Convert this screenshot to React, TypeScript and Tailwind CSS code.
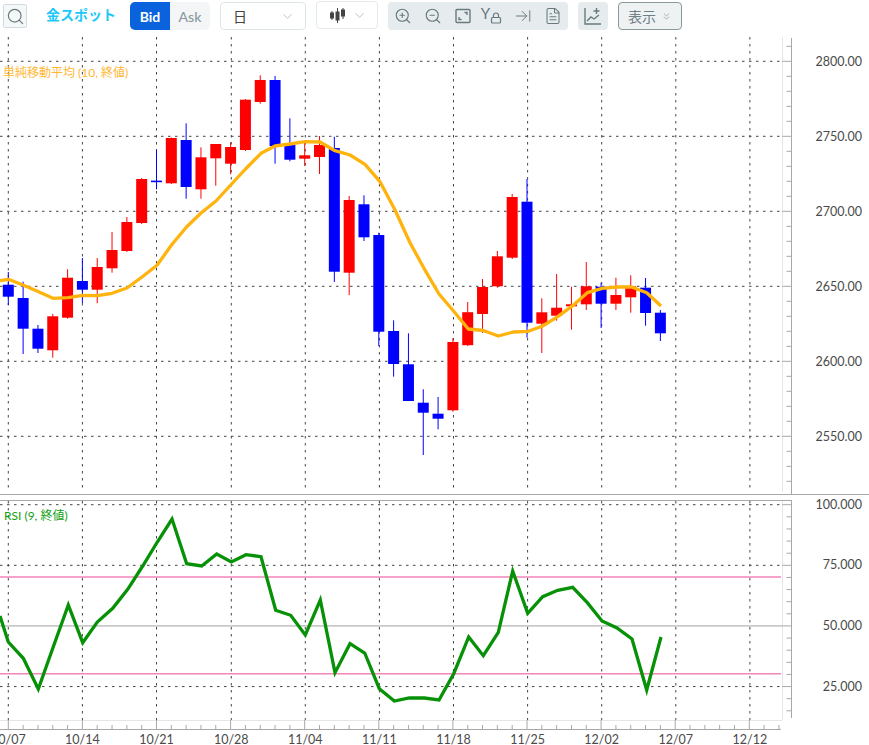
import { ChevronDown, ChevronsDown, Search, ZoomIn, ZoomOut, ArrowRightToLine, FileText, Lock } from 'lucide-react';

const FONT = "font-['Lato','Noto_Sans_CJK_JP',sans-serif]";

// x position of a candle on the page
const cx = (i: number) => 8.3 + 14.82 * i;

// wickTop, wickBottom, bodyTop, bodyBottom, up?
const CANDLES: [number, number, number, number, boolean][] = [
  [272, 305, 284.7, 296.7, false],
  [281.7, 354, 298, 328.7, false],
  [325, 353, 328.7, 348.7, false],
  [314, 357.7, 316.3, 350.3, true],
  [269.3, 318.7, 277.7, 317.7, true],
  [258, 303, 281, 289.7, false],
  [258, 303.3, 267, 289.7, true],
  [232, 272.7, 250, 268.3, true],
  [217, 252, 222, 251, true],
  [178, 224, 179, 223, true],
  [150, 189.3, 180.6, 182.2, false],
  [137.5, 184, 138, 183.3, true],
  [123.3, 198.7, 140, 187, false],
  [147.3, 198.7, 157.3, 189.3, true],
  [144, 185.7, 144, 158.3, true],
  [142.3, 174.3, 147, 163.7, true],
  [99, 151, 99.7, 150, true],
  [75.3, 103.7, 80, 102, true],
  [76, 163.7, 80, 146, false],
  [118.3, 161.3, 145, 159.7, false],
  [142, 166, 155.3, 158.7, true],
  [136, 174, 145, 157, true],
  [136.7, 282, 148, 271.7, false],
  [196, 295, 200, 272.7, true],
  [195.3, 241, 204.3, 237.3, false],
  [232.7, 346, 235, 331.7, false],
  [320.3, 376.7, 331, 364, false],
  [333.3, 401, 364.3, 401, false],
  [389.3, 455, 402.7, 412.7, false],
  [397, 429.3, 413.7, 418.7, false],
  [338.3, 411.7, 342, 410.3, true],
  [302, 346, 312.2, 345.2, true],
  [279, 333, 287, 314, true],
  [251, 287.7, 256.3, 286.3, true],
  [194, 259, 197, 257.7, true],
  [179, 337.7, 201.7, 322.7, false],
  [298.3, 353, 312.3, 323.7, true],
  [274, 320.7, 307.7, 315.7, true],
  [286.7, 329.7, 304.3, 306.3, true],
  [262, 310, 286.3, 304.3, true],
  [282.7, 328, 286.7, 303.7, false],
  [277.7, 310, 295, 303.7, true],
  [275.3, 312.7, 286.3, 297.3, true],
  [278, 325.7, 287.7, 313, false],
  [310, 341, 312.7, 333.3, false],
];

const MA_LINE =
  '0,280.7 8.3,279.3 23,285 38,291.5 53,298.3 68,297.7 82.7,295.3 97.5,295.7 112,293.3 127,288 142,277 157,265.3 171.5,245 186.5,227 201,213 216,201 230.7,185 245.5,169 261,153.3 275,146 290,144 305,141.7 320,142 335,150.7 350,155 365,164.3 380,181.7 395,210 410,242.7 424,268.3 439,294 453.5,311 468.3,329 483.3,330.5 498.3,336 513.3,332 528.3,331.3 542.7,326 557.7,316.7 572.7,305.7 587.3,292.7 602.3,288.3 616.7,287 631.7,287 646.7,292.7 661,306';

const RSI_LINE =
  '0,616 8.3,642 23.3,658.3 38.3,689 53.3,646.7 68.3,605 82.7,642.7 97.3,622 112.7,608.3 127.7,589.3 142.7,566 157.3,542 172,519 186.7,563.7 201.7,566 216.7,554 231.3,562 246,554.7 261,556.7 275.7,610.3 290.7,615.3 305.3,635 320.3,600 335,672.7 350,643.7 364.7,653 379.3,688.7 394.3,701 409.3,698 424.3,698 439,700 453.7,673.7 468.7,637 483.3,655.7 498.3,632.3 512.7,571 527.7,613.3 542.7,596.7 557.7,590.3 572.7,587.3 587.3,602.7 602,621 617,628 632,639 646.7,690 661,637';

const GRID_X = [8.3, 82.4, 156.5, 231.3, 305.3, 379.4, 453.5, 527.6, 601.7, 675.8, 749.9];
const DATES = ['10/07', '10/14', '10/21', '10/28', '11/04', '11/11', '11/18', '11/25', '12/02', '12/07', '12/12'];
const PRICES = [2800, 2750, 2700, 2650, 2600, 2550];
const priceY = (p: number) => 61.3 + (2800 - p) * 1.5;
const rsiY = (v: number) => 504.7 + (100 - v) * 2.425;

function DottedV({ top, bottom }: { top: number; bottom: number }) {
  return (
    <>
      {GRID_X.map((x) => (
        <line key={x} x1={x} x2={x} y1={top} y2={bottom} stroke="#444" strokeDasharray="2.5 4.5" />
      ))}
    </>
  );
}

function DottedH({ y }: { y: number }) {
  return <line x1={0} x2={782} y1={y} y2={y} stroke="#444" strokeDasharray="2.5 4.5" />;
}

function PricePane() {
  return (
    <svg width={869} height={457} viewBox="0 37 869 457" className="block shrink-0">
      <DottedV top={37} bottom={492} />
      {PRICES.map((p) => (
        <DottedH key={p} y={priceY(p)} />
      ))}

      {/* axis */}
      <line x1={782.5} x2={782.5} y1={37} y2={492} stroke="#e6e6e6" />
      <line x1={791.5} x2={791.5} y1={38} y2={494} stroke="#a8a8a8" />
      {Array.from({ length: 30 }, (_, k) => {
        const y = 46.3 + 15 * k;
        const major = (k - 1) % 5 === 0;
        return <line key={k} x1={major ? 782 : 786.5} x2={791} y1={y} y2={y} stroke="#a8a8a8" />;
      })}
      {PRICES.map((p) => (
        <text key={p} x={862} y={priceY(p) + 4.5} textAnchor="end" fontSize={12.5} fill="#4a4a4a">
          {p}.00
        </text>
      ))}

      {/* candles */}
      {CANDLES.map(([wt, wb, bt, bb, up], i) => {
        const x = cx(i);
        const color = up ? '#ff0000' : '#0000ff';
        return (
          <g key={i}>
            <line x1={x} x2={x} y1={wt} y2={wb} stroke={color} strokeWidth={1} />
            <rect x={x - 5.5} y={bt} width={11} height={bb - bt} fill={color} />
          </g>
        );
      })}
      <polyline points={MA_LINE} fill="none" stroke="#ffb30d" strokeWidth={3.3} strokeLinejoin="round" />

      <text x={3} y={77} fontSize={12} fill="#ffb733">
        単純移動平均 (10, 終値)
      </text>
    </svg>
  );
}

function RsiPane() {
  return (
    <svg width={869} height={220} viewBox="0 500 869 220" className="block shrink-0 overflow-visible">
      <line x1={0} x2={791} y1={500.5} y2={500.5} stroke="#a8a8a8" />
      <DottedV top={501} bottom={720} />
      {[100, 75, 25].map((v) => (
        <DottedH key={v} y={rsiY(v)} />
      ))}
      <line x1={0} x2={782} y1={rsiY(50)} y2={rsiY(50)} stroke="#a0a0a0" />
      <line x1={0} x2={781} y1={577} y2={577} stroke="#f285b9" strokeWidth={1.6} />
      <line x1={0} x2={781} y1={673.8} y2={673.8} stroke="#f285b9" strokeWidth={1.6} />

      <line x1={782.5} x2={782.5} y1={501} y2={720} stroke="#e6e6e6" />
      <line x1={791.5} x2={791.5} y1={500} y2={718} stroke="#a8a8a8" />
      {Array.from({ length: 18 }, (_, k) => {
        const y = rsiY(100 - k * 5);
        const major = k % 5 === 0;
        return <line key={k} x1={major ? 782 : 786.5} x2={791} y1={y} y2={y} stroke="#a8a8a8" />;
      })}
      {[100, 75, 50, 25].map((v) => (
        <text key={v} x={862} y={rsiY(v) + 4} textAnchor="end" fontSize={12.5} fill="#4a4a4a">
          {v}.000
        </text>
      ))}

      <polyline points={RSI_LINE} fill="none" stroke="#079107" strokeWidth={3.3} strokeLinejoin="miter" />

      <text x={4} y={520} fontSize={12} fill="#12a012">
        RSI (9, 終値)
      </text>
    </svg>
  );
}

function TimeAxis() {
  return (
    <svg width={869} height={25} viewBox="0 720 869 25" className="block shrink-0">
      <line x1={0} x2={782} y1={720.5} y2={720.5} stroke="#e6e6e6" />
      <line x1={0} x2={781} y1={729.5} y2={729.5} stroke="#a8a8a8" />
      {Array.from({ length: 53 }, (_, i) => {
        const x = cx(i);
        const major = i % 5 === 0;
        return <line key={i} x1={x} x2={x} y1={major ? 720 : 725} y2={729} stroke="#a8a8a8" />;
      })}
      {DATES.map((d, i) => (
        <text key={d} x={GRID_X[i]} y={743.5} textAnchor="middle" fontSize={12.5} fill="#4a4a4a">
          {d}
        </text>
      ))}
    </svg>
  );
}

function CandleIcon() {
  return (
    <svg width={17} height={15} viewBox="0 0 17 15">
      <g stroke="#444" fill="#444">
        <line x1={3} x2={3} y1={3} y2={12} />
        <rect x={1.5} y={5} width={3} height={5} />
        <line x1={8.5} x2={8.5} y1={0} y2={15} />
        <rect x={7} y={4} width={3} height={8} />
        <line x1={14} x2={14} y1={0} y2={11} />
        <rect x={12.5} y={2} width={3} height={6} />
      </g>
    </svg>
  );
}

function FitIcon() {
  return (
    <svg width={16} height={16} viewBox="0 0 16 16" fill="none" stroke="#68797e" strokeWidth={1.4}>
      <rect x={1} y={1.5} width={14} height={13} rx={1} />
      <path d="M9.5 4.5h2.5v2.5M6.5 11.5H4V9" />
    </svg>
  );
}

function ChartPlusIcon() {
  return (
    <svg width={18} height={18} viewBox="0 0 18 18" fill="none" stroke="#68797e" strokeWidth={1.4}>
      <path d="M1 1v16h16" />
      <path d="M3 14l4-4 3 2 5-4" />
      <path d="M12.5 1v6M9.5 4h6" />
    </svg>
  );
}

function Toolbar() {
  return (
    <div className="flex h-[37px] shrink-0 items-start pt-[2px] pl-[3px]">
      <button className="mt-[2px] flex h-[24px] w-[24px] items-center justify-center rounded-[2px] border border-[#cfdde0] bg-[#f5f8f9]">
        <Search size={19} strokeWidth={1.5} color="#68797e" />
      </button>

      <span className="ml-[19px] mt-[3px] w-[84px] text-[14px] font-bold leading-[20px] text-[#1cc8f7]">金スポット</span>

      <div className="flex h-[28px] w-[80px] overflow-hidden rounded-[5px] text-[14px]">
        <span className="flex w-[40px] items-center justify-center bg-[#0a63dc] font-bold text-white">Bid</span>
        <span className="flex w-[40px] items-center justify-center bg-[#f3f5f6] font-medium text-[#8a9aa0]">Ask</span>
      </div>

      <div className="ml-[10px] flex h-[28px] w-[86px] items-center justify-between rounded-[4px] border border-[#dce5e8] pl-[12px] pr-[10px] text-[14px] text-[#444]">
        <span>日</span>
        <ChevronDown size={15} strokeWidth={1.5} color="#b5c0c4" />
      </div>

      <div className="ml-[10px] -mt-[1px] flex h-[28px] w-[62px] items-center justify-between rounded-[4px] border border-[#e4eaec] pl-[12px] pr-[10px]">
        <CandleIcon />
        <ChevronDown size={15} strokeWidth={1.5} color="#b5c0c4" />
      </div>

      <div className="ml-[10px] flex h-[28px] w-[180px] items-center rounded-[4px] bg-[#e6ecee]">
        <span className="flex w-[30px] justify-center">
          <ZoomIn size={18} strokeWidth={1.5} color="#68797e" />
        </span>
        <span className="flex w-[30px] justify-center">
          <ZoomOut size={18} strokeWidth={1.5} color="#68797e" />
        </span>
        <span className="flex w-[30px] justify-center">
          <FitIcon />
        </span>
        <span className="flex h-[20px] w-[30px] justify-center text-[15px] leading-[15px] text-[#68797e]">
          <span className="-ml-[3px]">Y</span>
          <Lock size={12} strokeWidth={2.4} color="#68797e" className="mt-[6px]" />
        </span>
        <span className="flex w-[30px] justify-center">
          <ArrowRightToLine size={18} strokeWidth={1.3} color="#68797e" />
        </span>
        <span className="flex w-[30px] justify-center">
          <FileText size={18} strokeWidth={1.4} color="#68797e" />
        </span>
      </div>

      <div className="ml-[10px] flex h-[28px] w-[30px] items-center justify-center rounded-[4px] bg-[#e6ecee]">
        <ChartPlusIcon />
      </div>

      <div className="ml-[10px] flex h-[28px] w-[64px] items-center justify-center gap-[5px] rounded-[4px] border border-[#8a9a9a] bg-[#eef2f3] text-[14px] text-[#6f8088]">
        <span>表示</span>
        <ChevronsDown size={11} strokeWidth={1.5} color="#8a9a9f" />
      </div>
    </div>
  );
}

export default function App() {
  return (
    <div className={`flex h-[745px] w-[869px] flex-col overflow-hidden bg-white ${FONT}`}>
      <Toolbar />
      <PricePane />
      {/* pane divider */}
      <div className="h-[6px] shrink-0 border-t border-[#a8a8a8]" />
      <RsiPane />
      <TimeAxis />
    </div>
  );
}
